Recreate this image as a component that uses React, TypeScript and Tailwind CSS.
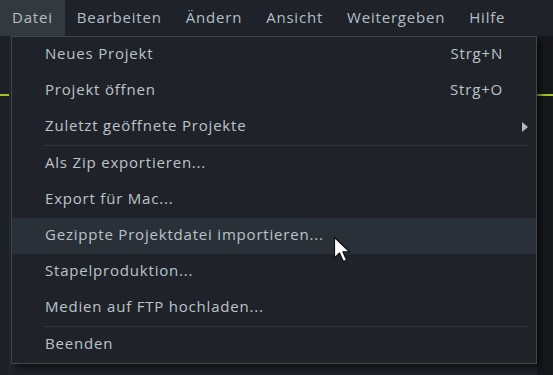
const menuBar = ["Datei", "Bearbeiten", "Ändern", "Ansicht", "Weitergeben", "Hilfe"]

type Entry =
  | { kind: "item"; label: string; shortcut?: string; submenu?: boolean; active?: boolean }
  | { kind: "separator" }

const fileMenu: Entry[] = [
  { kind: "item", label: "Neues Projekt", shortcut: "Strg+N" },
  { kind: "item", label: "Projekt öffnen", shortcut: "Strg+O" },
  { kind: "item", label: "Zuletzt geöffnete Projekte", submenu: true },
  { kind: "separator" },
  { kind: "item", label: "Als Zip exportieren..." },
  { kind: "item", label: "Export für Mac..." },
  { kind: "item", label: "Gezippte Projektdatei importieren...", active: true },
  { kind: "item", label: "Stapelproduktion..." },
  { kind: "item", label: "Medien auf FTP hochladen..." },
  { kind: "separator" },
  { kind: "item", label: "Beenden" },
]

function Pointer() {
  return (
    <svg width="20" height="28" viewBox="0 0 20 28" className="absolute left-[333px] top-[236px]">
      <path
        d="M1.5 1.5 L1.5 22 L6.5 17 L10.3 25.5 L13.6 24 L9.8 15.8 L16.5 15.8 Z"
        fill="#ffffff"
        stroke="#111111"
        strokeWidth="1.2"
        strokeLinejoin="round"
      />
    </svg>
  )
}

export default function App() {
  return (
    <main
      className="relative h-[375px] w-[553px] overflow-hidden bg-[#1a1d21] text-[15px] tracking-[0.8px]"
      style={{ fontFamily: '"Open Sans", "Liberation Sans", sans-serif' }}
    >
      <nav className="flex h-[36px] items-stretch bg-[#1f2329] text-[#b2bfc8]">
        {menuBar.map((label, i) => (
          <span
            key={label}
            className={`flex items-center px-3 pb-[2px] ${i === 0 ? "bg-[#323a3f]" : ""}`}
          >
            {label}
          </span>
        ))}
      </nav>

      {/* app content behind the open menu */}
      <div className="flex h-[339px]">
        <div className="w-[10px] border-r border-[#262b30] bg-[#1d2025]">
          <div className="mt-[58px] h-[2px] bg-[#a6c423]" />
        </div>
        <div className="flex-1 bg-[#1f2329]" />
        <div className="w-[16px] bg-[#16181c]">
          <div className="mt-[58px] h-[2px] bg-[#a6c423]" />
        </div>
      </div>

      <div className="absolute left-[11px] top-[36px] w-[526px] border border-[#3d4949] bg-[#1f2329] text-[#bcc3ca] shadow-[4px_4px_6px_rgba(0,0,0,0.55)]">
        {fileMenu.map((entry, i) =>
          entry.kind === "separator" ? (
            <div key={i} className="ml-[32px] mr-[9px] h-px bg-[#30373b]" />
          ) : (
            <div
              key={entry.label}
              className={`flex h-[36px] items-center pb-[3px] pl-[33px] ${entry.submenu ? "pr-2" : "pr-[33px]"} ${
                entry.active ? "bg-[#2a3037]" : ""
              }`}
            >
              <span className="flex-1">{entry.label}</span>
              {entry.shortcut ? <span>{entry.shortcut}</span> : null}
              {entry.submenu ? (
                <svg width="6" height="10" viewBox="0 0 6 10" className="mt-[3px]">
                  <path d="M0 0 L6 5 L0 10 Z" fill="#b0b8c0" />
                </svg>
              ) : null}
            </div>
          ),
        )}
      </div>

      <Pointer />
    </main>
  )
}
